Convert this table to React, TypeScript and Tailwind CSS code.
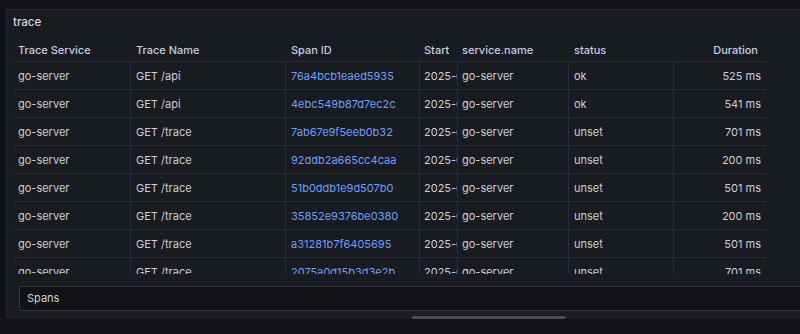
import React from "react";

type Row = { svc: string; name: string; span: string; start: string; sname: string; status: string; dur: string };

const rows: Row[] = [
  { svc: "go-server", name: "GET /api", span: "76a4bcb1eaed5935", start: "2025-06-12 10:21:04", sname: "go-server", status: "ok", dur: "525 ms" },
  { svc: "go-server", name: "GET /api", span: "4ebc549b87d7ec2c", start: "2025-06-12 10:21:04", sname: "go-server", status: "ok", dur: "541 ms" },
  { svc: "go-server", name: "GET /trace", span: "7ab67e9f5eeb0b32", start: "2025-06-12 10:21:04", sname: "go-server", status: "unset", dur: "701 ms" },
  { svc: "go-server", name: "GET /trace", span: "92ddb2a665cc4caa", start: "2025-06-12 10:21:04", sname: "go-server", status: "unset", dur: "200 ms" },
  { svc: "go-server", name: "GET /trace", span: "51b0ddb1e9d507b0", start: "2025-06-12 10:21:04", sname: "go-server", status: "unset", dur: "501 ms" },
  { svc: "go-server", name: "GET /trace", span: "35852e9376be0380", start: "2025-06-12 10:21:04", sname: "go-server", status: "unset", dur: "200 ms" },
  { svc: "go-server", name: "GET /trace", span: "a31281b7f6405695", start: "2025-06-12 10:21:04", sname: "go-server", status: "unset", dur: "501 ms" },
  { svc: "go-server", name: "GET /trace", span: "2075a0d15b3d3e2b", start: "2025-06-12 10:21:04", sname: "go-server", status: "unset", dur: "701 ms" },
];

const widths = ["w-[117px]", "w-[155px]", "w-[134px]", "w-[38px]", "w-[111px]", "w-[105px]", "w-[93px]"];

export default function App() {
  return (
    <div
      className="relative w-[800px] h-[334px] overflow-hidden bg-[#111217] pt-[9px] pl-[6px]"
      style={{ fontFamily: "Inter, 'Noto Sans', sans-serif" }}
    >
      <div className="w-[830px] h-[309px] border border-[#24262b] bg-[#181b1f] flex flex-col">
        <div className="h-[28px] pl-[6px] flex items-center text-[11.5px] font-medium text-[#d8d9e3] pb-[3px]">trace</div>
        <div className="ml-[6px] w-[753px] h-[236px] overflow-hidden text-[11px]">
          <div className="flex h-[24px] border-b border-[#2a2c32] text-[#c5cde2] font-medium">
            <div className={`${widths[0]} pl-[5px] flex items-center pt-[2px]`}>Trace Service</div>
            <div className={`${widths[1]} pl-[6px] flex items-center pt-[2px]`}>Trace Name</div>
            <div className={`${widths[2]} pl-[6px] flex items-center pt-[2px]`}>Span ID</div>
            <div className={`${widths[3]} pl-[5px] flex items-center pt-[2px] overflow-hidden whitespace-nowrap`}>Start</div>
            <div className={`${widths[4]} pl-[5px] flex items-center pt-[2px]`}>service.name</div>
            <div className={`${widths[5]} pl-[6px] flex items-center pt-[2px]`}>status</div>
            <div className={`${widths[6]} pr-[8px] flex items-center justify-end pt-[2px]`}>Duration</div>
          </div>
          {rows.map((r, i) => (
            <div key={i} className="flex h-[28px] border-b border-[#2a2c32] text-[#cdced8]">
              <div className={`${widths[0]} pl-[5px] flex items-center pt-[2px] whitespace-nowrap`}>{r.svc}</div>
              <div className={`${widths[1]} pl-[5px] border-l border-[#2a2c32] flex items-center pt-[2px] whitespace-nowrap`}>{r.name}</div>
              <div className={`${widths[2]} pl-[5px] border-l border-[#2a2c32] flex items-center pt-[2px] whitespace-nowrap text-[#6e9fff]`}>{r.span}</div>
              <div className={`${widths[3]} pl-[4px] border-l border-[#2a2c32] flex items-center pt-[2px] whitespace-nowrap overflow-hidden`}>
                <span className="block min-w-0 flex-1 overflow-hidden">{r.start}</span>
              </div>
              <div className={`${widths[4]} pl-[4px] border-l border-[#2a2c32] flex items-center pt-[2px] whitespace-nowrap`}>{r.sname}</div>
              <div className={`${widths[5]} pl-[5px] border-l border-[#2a2c32] flex items-center pt-[2px] whitespace-nowrap`}>{r.status}</div>
              <div className={`${widths[6]} pr-[5px] border-l border-[#2a2c32] flex items-center justify-end pt-[2px] whitespace-nowrap`}>{r.dur}</div>
            </div>
          ))}
        </div>
        <div className="mt-[12px] ml-[12px] h-[25px] w-[800px] border border-[#35373d] rounded-[2px] bg-[#111217] flex items-center pl-[7px] text-[11px] text-[#d0d1da]">
          Spans
        </div>
      </div>
      <div className="absolute left-[412px] top-[316px] w-[154px] h-[3px] rounded-full bg-[#4a4c52]" />
    </div>
  );
}
